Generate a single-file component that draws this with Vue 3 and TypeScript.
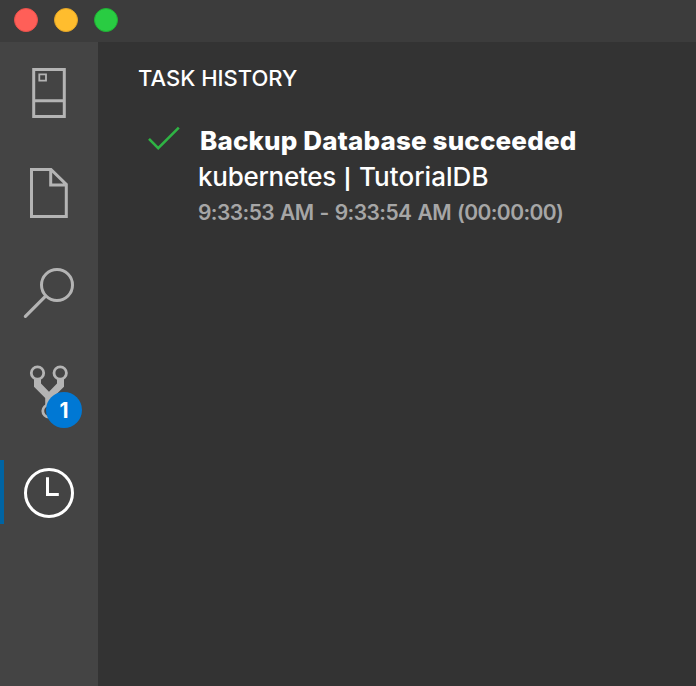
<script setup lang="ts">
interface Task {
  title: string
  server: string
  database: string
  time: string
}

const windowButtons: string[] = ['close', 'minimize', 'maximize']
const taskCount = 1
const tasks: Task[] = [
  {
    title: 'Backup Database succeeded',
    server: 'kubernetes',
    database: 'TutorialDB',
    time: '9:33:53 AM - 9:33:54 AM (00:00:00)',
  },
]
</script>

<template>
  <div class="window">
    <header class="titlebar">
      <span v-for="name in windowButtons" :key="name" class="dot" :class="name"></span>
    </header>
    <div class="body">
      <nav class="activity">
        <div class="item">
          <svg class="icon" viewBox="0 0 50 50">
            <path d="M9.7 1.5H40.3V48.5H9.7ZM9.7 32.8H40.3" stroke-width="3" />
            <path d="M15.3 6.3H22V12.6H15.3Z" stroke-width="1.8" />
          </svg>
        </div>
        <div class="item">
          <svg class="icon" viewBox="0 0 50 50">
            <path d="M7.5 1.5H27L42.3 16.5V48.5H7.5ZM26.7 1.5V16.9H42.3" stroke-width="3" />
          </svg>
        </div>
        <div class="item">
          <svg class="icon" viewBox="0 0 50 50">
            <circle cx="33" cy="17" r="15.5" stroke-width="3" />
            <path d="M21.6 28.2L1.4 48.4" stroke-width="3.2" stroke-linecap="round" />
          </svg>
        </div>
        <div class="item">
          <svg class="icon" viewBox="0 0 50 50">
            <circle cx="13.5" cy="5" r="6.2" stroke-width="2.8" />
            <circle cx="36.2" cy="5" r="6.2" stroke-width="2.8" />
            <circle cx="25" cy="43" r="6.2" stroke-width="2.8" />
            <path class="solid" d="M10 10.2Q13.5 12.2 17 10.2V15.5L25 23.8L33 15.5V10.2Q36.2 12.2 40 10.2V18.7L28.5 30V37.5H21.2V30L10 18.7Z" />
          </svg>
          <span class="badge">{{ taskCount }}</span>
        </div>
        <div class="item active">
          <svg class="icon" viewBox="0 0 50 50">
            <circle cx="25" cy="25" r="23.5" stroke-width="3" />
            <path d="M23.5 9.3V26.5H34.8" stroke-width="3" />
          </svg>
        </div>
      </nav>
      <main class="panel">
        <h1 class="heading">TASK HISTORY</h1>
        <article v-for="task in tasks" :key="task.time" class="task">
          <svg class="check" viewBox="0 0 34 26">
            <path d="M2 13.9L11.2 23.2L31.8 2.6" />
          </svg>
          <div class="details">
            <div class="title">{{ task.title }}</div>
            <div class="target"><span class="server">{{ task.server }}</span> <span class="divider">|</span> {{ task.database }}</div>
            <div class="time">{{ task.time }}</div>
          </div>
        </article>
      </main>
    </div>
  </div>
</template>

<style>
body {
  background: #333333;
}
</style>

<style scoped>
.window {
  width: 696px;
  height: 686px;
  display: flex;
  flex-direction: column;
  overflow: hidden;
  background: #333333;
  color: #ffffff;
  font-family: Inter, "Liberation Sans", sans-serif;
}
.titlebar {
  height: 42px;
  flex: none;
  box-sizing: border-box;
  padding: 8px 14px;
  display: flex;
  gap: 16px;
  background: #3c3c3c;
}
.dot {
  box-sizing: border-box;
  width: 24px;
  height: 24px;
  border-radius: 50%;
}
.close {
  background: #ff5f58;
  border: 1px solid #e9504a;
}
.minimize {
  background: #ffbd2e;
  border: 1px solid #e3a526;
}
.maximize {
  background: #29cc42;
  border: 1px solid #1fb134;
}
.body {
  flex: 1;
  display: flex;
}
.activity {
  width: 98px;
  flex: none;
  box-sizing: border-box;
  padding-top: 1px;
  background: #444444;
}
.item {
  position: relative;
  height: 100px;
  display: flex;
  justify-content: center;
  align-items: center;
}
.icon {
  width: 50px;
  height: 50px;
  overflow: visible;
  fill: none;
  stroke: #b4b4b4;
}
.solid {
  fill: #b4b4b4;
  stroke: none;
}
.active .icon {
  stroke: #ffffff;
}
.active::before {
  content: "";
  position: absolute;
  left: 0;
  top: 17px;
  width: 4px;
  height: 64px;
  background: #0064a3;
}
.badge {
  position: absolute;
  left: 46px;
  top: 49px;
  width: 36px;
  height: 36px;
  border-radius: 50%;
  background: #0078d4;
  font-size: 21px;
  font-weight: 700;
  line-height: 37px;
  text-align: center;
}
.panel {
  flex: 1;
  padding: 18px 0 0 40px;
  white-space: nowrap;
}
.heading {
  margin: 0;
  font-size: 22px;
  font-weight: 500;
  line-height: 36px;
}
.task {
  display: flex;
  padding: 27px 0 0 9px;
}
.check {
  width: 34px;
  height: 26px;
  flex: none;
  margin: 2px 17px 0 0;
  fill: none;
  stroke: #2fb344;
  stroke-width: 2.6;
}
.details {
  line-height: 36px;
}
.title {
  padding-left: 2px;
  font-size: 26px;
  font-weight: 800;
  letter-spacing: 0.16px;
}
.target {
  height: 36px;
  font-size: 26px;
  font-weight: 500;
  letter-spacing: 0.05px;
}
.server {
  letter-spacing: -0.27px;
}
.divider {
  display: inline-block;
  width: 9px;
  font-size: 20px;
  font-weight: 700;
  line-height: 1;
  text-align: center;
}
.time {
  font-size: 21px;
  font-weight: 600;
  letter-spacing: -0.58px;
  word-spacing: 1.3px;
  color: #a6a6a6;
}
</style>
